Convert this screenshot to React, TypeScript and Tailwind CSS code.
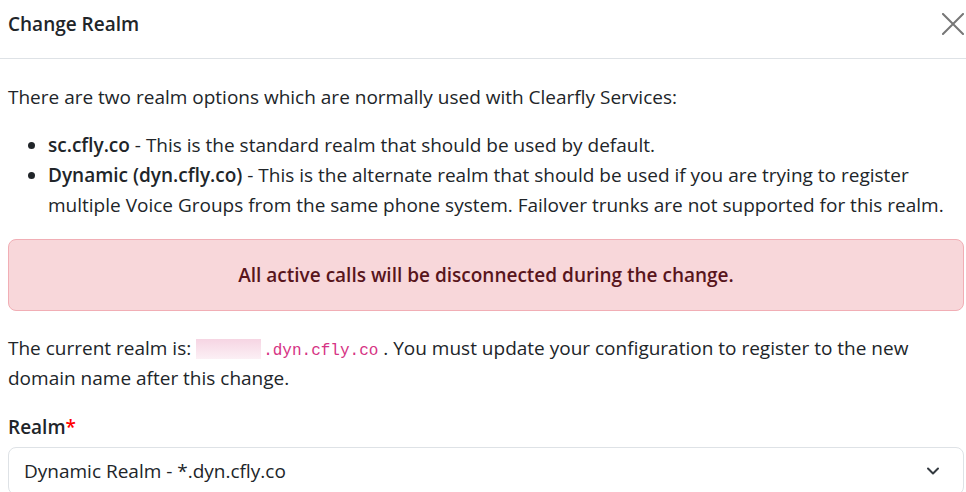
import { ChevronDown } from 'lucide-react';

const FONT = "font-['Open_Sans','Noto_Sans',sans-serif]";

function CloseIcon() {
  return (
    <svg width="22" height="22" viewBox="0 0 22 22" className="text-[#777]">
      <path d="M1 1 L21 21 M21 1 L1 21" stroke="currentColor" strokeWidth="2" strokeLinecap="square" />
    </svg>
  );
}

export default function App() {
  return (
    <div className={`${FONT} w-[966px] h-[492px] overflow-hidden bg-white text-[#212529] text-[19px] leading-[30px]`}>
      {/* Header */}
      <div className="h-[59px] flex items-start justify-between pl-2 pr-[2px] pt-[9px] border-b border-[#dee2e6]">
        <h5 className="font-semibold text-[19px] leading-[30px]">Change Realm</h5>
        <button className="mt-[4px]" aria-label="Close">
          <CloseIcon />
        </button>
      </div>

      {/* Body */}
      <div className="pl-2 pr-[2px] pt-[23px]">
        <p>There are two realm options which are normally used with Clearfly Services:</p>

        <ul className="list-disc pl-10 mt-[18px]">
          <li>
            <span className="font-semibold">sc.cfly.co</span> - This is the standard realm that should be used by default.
          </li>
          <li>
            <span className="font-semibold">Dynamic (dyn.cfly.co)</span> - This is the alternate realm that should be used if you are trying to register multiple Voice Groups from the same phone system. Failover trunks are not supported for this realm.
          </li>
        </ul>

        <div className="mt-[19px] rounded-[8px] border border-[#f1aeb5] bg-[#f8d7da] text-[#58151c] font-semibold text-center py-[20px]">
          All active calls will be disconnected during the change.
        </div>

        <p className="mt-[22px]">
          The current realm is:{' '}
          <code className="font-['Liberation_Mono',monospace] text-[16px] leading-none text-[#d63384]">
            <span className="inline-block align-[-4px] w-[65px] h-[20px] bg-linear-to-b from-[#f6d5e3] to-[#fcf0f5] mr-[2px]" />
            .dyn.cfly.co
          </code>{' '}
          . You must update your configuration to register to the new domain name after this change.
        </p>

        <label className="block mt-[19px] font-semibold">
          Realm<span className="text-[#f00]">*</span>
        </label>

        <div className="mt-[5px] h-[48px] rounded-[8px] border border-[#dee2e6] flex items-center justify-between pl-[15px] pr-[20px]">
          <span>Dynamic Realm - *.dyn.cfly.co</span>
          <ChevronDown size={20} strokeWidth={2.4} className="text-[#343a40]" />
        </div>
      </div>
    </div>
  );
}
